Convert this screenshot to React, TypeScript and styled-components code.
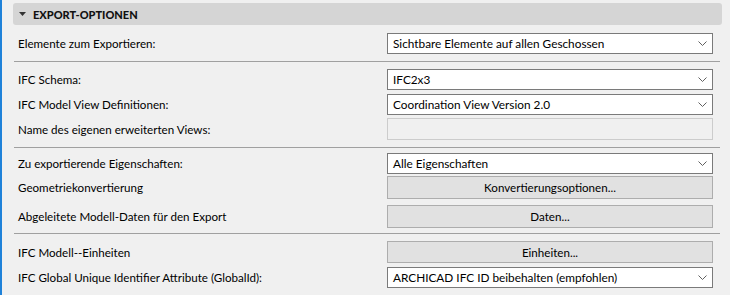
import React from 'react';
import styled, { createGlobalStyle } from 'styled-components';

const GlobalStyle = createGlobalStyle`
  html, body {
    margin: 0;
    padding: 0;
    background: #f0f0f0;
  }
  body {
    font-family: Lato, 'Noto Sans', sans-serif;
    font-size: 11.6px;
    color: #000;
  }
`;

const Page = styled.div`
  box-sizing: border-box;
  height: 295px;
  border-left: 2px solid #1f82d9;
  padding: 3px 8px 0 11px;
`;

const Header = styled.div`
  display: flex;
  align-items: center;
  height: 22px;
  padding-left: 6px;
  border-radius: 3px;
  background: #d5d5d5;
  font-size: 11px;
  font-weight: 900;
  color: #111;
`;

const Caret = styled.svg`
  width: 7px;
  height: 4px;
  margin-right: 7px;
  fill: #333;
`;

const Group = styled.div<{ $pt: number; $pb: number }>`
  display: flex;
  flex-direction: column;
  padding: ${p => p.$pt}px 0 ${p => p.$pb}px;
`;

const Row = styled.div<{ $mt?: number }>`
  display: grid;
  grid-template-columns: 1fr 326px;
  align-items: center;
  padding: 0 9px 0 5px;
  margin-top: ${p => p.$mt ?? 0}px;
`;

const Label = styled.span`
  white-space: nowrap;
`;

const Separator = styled.div`
  height: 1px;
  margin: 0 2px 0 1px;
  background: #a0a0a0;
`;

const SelectBox = styled.div`
  box-sizing: border-box;
  display: flex;
  align-items: center;
  justify-content: space-between;
  height: 21px;
  padding: 0 5px 0 5px;
  background: #fff;
  border: 1px solid #7a7a7a;
  font-size: 11.8px;
`;

const Chevron = styled.svg`
  width: 9px;
  height: 5px;
  fill: none;
  stroke: #606060;
  stroke-width: 1;
`;

const EmptyField = styled.div`
  box-sizing: border-box;
  height: 22px;
  background: #f0f0f0;
  border: 1px solid #cccccc;
`;

const Button = styled.div<{ $h?: number }>`
  box-sizing: border-box;
  display: flex;
  align-items: center;
  justify-content: center;
  height: ${p => p.$h ?? 22}px;
  background: #e1e1e1;
  border: 1px solid #adadad;
`;

const Select = ({ value }: { value: string }) => (
  <SelectBox>
    <span>{value}</span>
    <Chevron viewBox="0 0 9 5">
      <path d="M0.5 0.5 L4.5 4.5 L8.5 0.5" />
    </Chevron>
  </SelectBox>
);

const App = () => (
  <>
    <GlobalStyle />
    <Page>
      <Header>
        <Caret viewBox="0 0 7 4">
          <path d="M0 0 H7 L3.5 4 Z" />
        </Caret>
        EXPORT-OPTIONEN
      </Header>

      <Group $pt={8} $pb={7}>
        <Row>
          <Label>Elemente zum Exportieren:</Label>
          <Select value="Sichtbare Elemente auf allen Geschossen" />
        </Row>
      </Group>
      <Separator />

      <Group $pt={7} $pb={7}>
        <Row>
          <Label>IFC Schema:</Label>
          <Select value="IFC2x3" />
        </Row>
        <Row $mt={4}>
          <Label>IFC Model View Definitionen:</Label>
          <Select value="Coordination View Version 2.0" />
        </Row>
        <Row $mt={3}>
          <Label>Name des eigenen erweiterten Views:</Label>
          <EmptyField />
        </Row>
      </Group>
      <Separator />

      <Group $pt={5} $pb={5}>
        <Row>
          <Label>Zu exportierende Eigenschaften:</Label>
          <Select value="Alle Eigenschaften" />
        </Row>
        <Row $mt={2}>
          <Label>Geometriekonvertierung</Label>
          <Button $h={23}>Konvertierungsoptionen...</Button>
        </Row>
        <Row $mt={6}>
          <Label>Abgeleitete Modell-Daten für den Export</Label>
          <Button $h={23}>Daten...</Button>
        </Row>
      </Group>
      <Separator />

      <Group $pt={7} $pb={0}>
        <Row>
          <Label>IFC Modell--Einheiten</Label>
          <Button>Einheiten...</Button>
        </Row>
        <Row $mt={4}>
          <Label>IFC Global Unique Identifier Attribute (GlobalId):</Label>
          <Select value="ARCHICAD IFC ID beibehalten (empfohlen)" />
        </Row>
      </Group>
    </Page>
  </>
);

export default App;
